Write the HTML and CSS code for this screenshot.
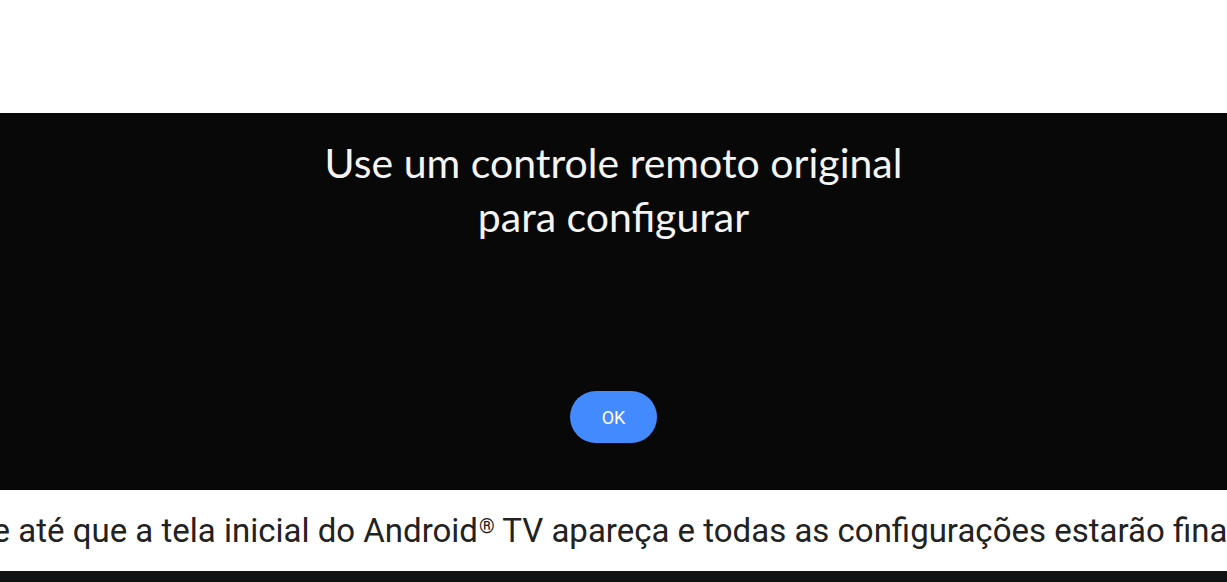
FILE: index.html
```html
<!DOCTYPE html>
<html>
    <head>
        <title>Controle remoto</title>
        <meta charset="utf-8">
        <link rel="stylesheet" href="styles.css">
    </head>
    <body>
        <div class="top_space"></div>

        <div class="tv_screen">
            <h1 class="tv_title">Use um controle remoto original<br>para configurar</h1>
            <button type="button" class="ok_btn">OK</button>
        </div>

        <div class="caption">
            <p class="caption_text">Aguarde até que a tela inicial do Android<sup>®</sup> TV apareça e todas as configurações estarão finalizadas.</p>
        </div>

        <div class="next_screen"></div>
    </body>
</html>
```

FILE: styles.css
```css
body {
    margin: 0;
    background-color: #ffffff;
    font-family: "Roboto", "Liberation Sans", sans-serif;
    overflow: hidden;
}
.top_space {
    height: 113px;
}
.tv_screen {
    height: 377px;
    background-color: #080808;
    display: flex;
    flex-direction: column;
    align-items: center;
}
.tv_title {
    margin: 23px 0 0 0;
    font-family: "Lato", "Inter", sans-serif;
    font-weight: 400;
    font-size: 41px;
    line-height: 54px;
    color: #f4f4f4;
    text-align: center;
}
.ok_btn {
    margin-top: 147px;
    width: 87px;
    height: 52px;
    border: none;
    border-radius: 26px;
    background-color: #448aff;
    color: #ffffff;
    font-family: "Roboto", sans-serif;
    font-size: 18px;
    padding: 0;
}
.caption {
    height: 81px;
    display: flex;
    justify-content: center;
    align-items: center;
    overflow: hidden;
}
.caption_text {
    margin: 0;
    white-space: nowrap;
    font-size: 33px;
    color: #222222;
}
.caption_text sup {
    font-size: 20px;
    vertical-align: 9px;
    line-height: 0;
    margin-left: 1px;
}
.next_screen {
    height: 40px;
    background-color: #111214;
}
```
